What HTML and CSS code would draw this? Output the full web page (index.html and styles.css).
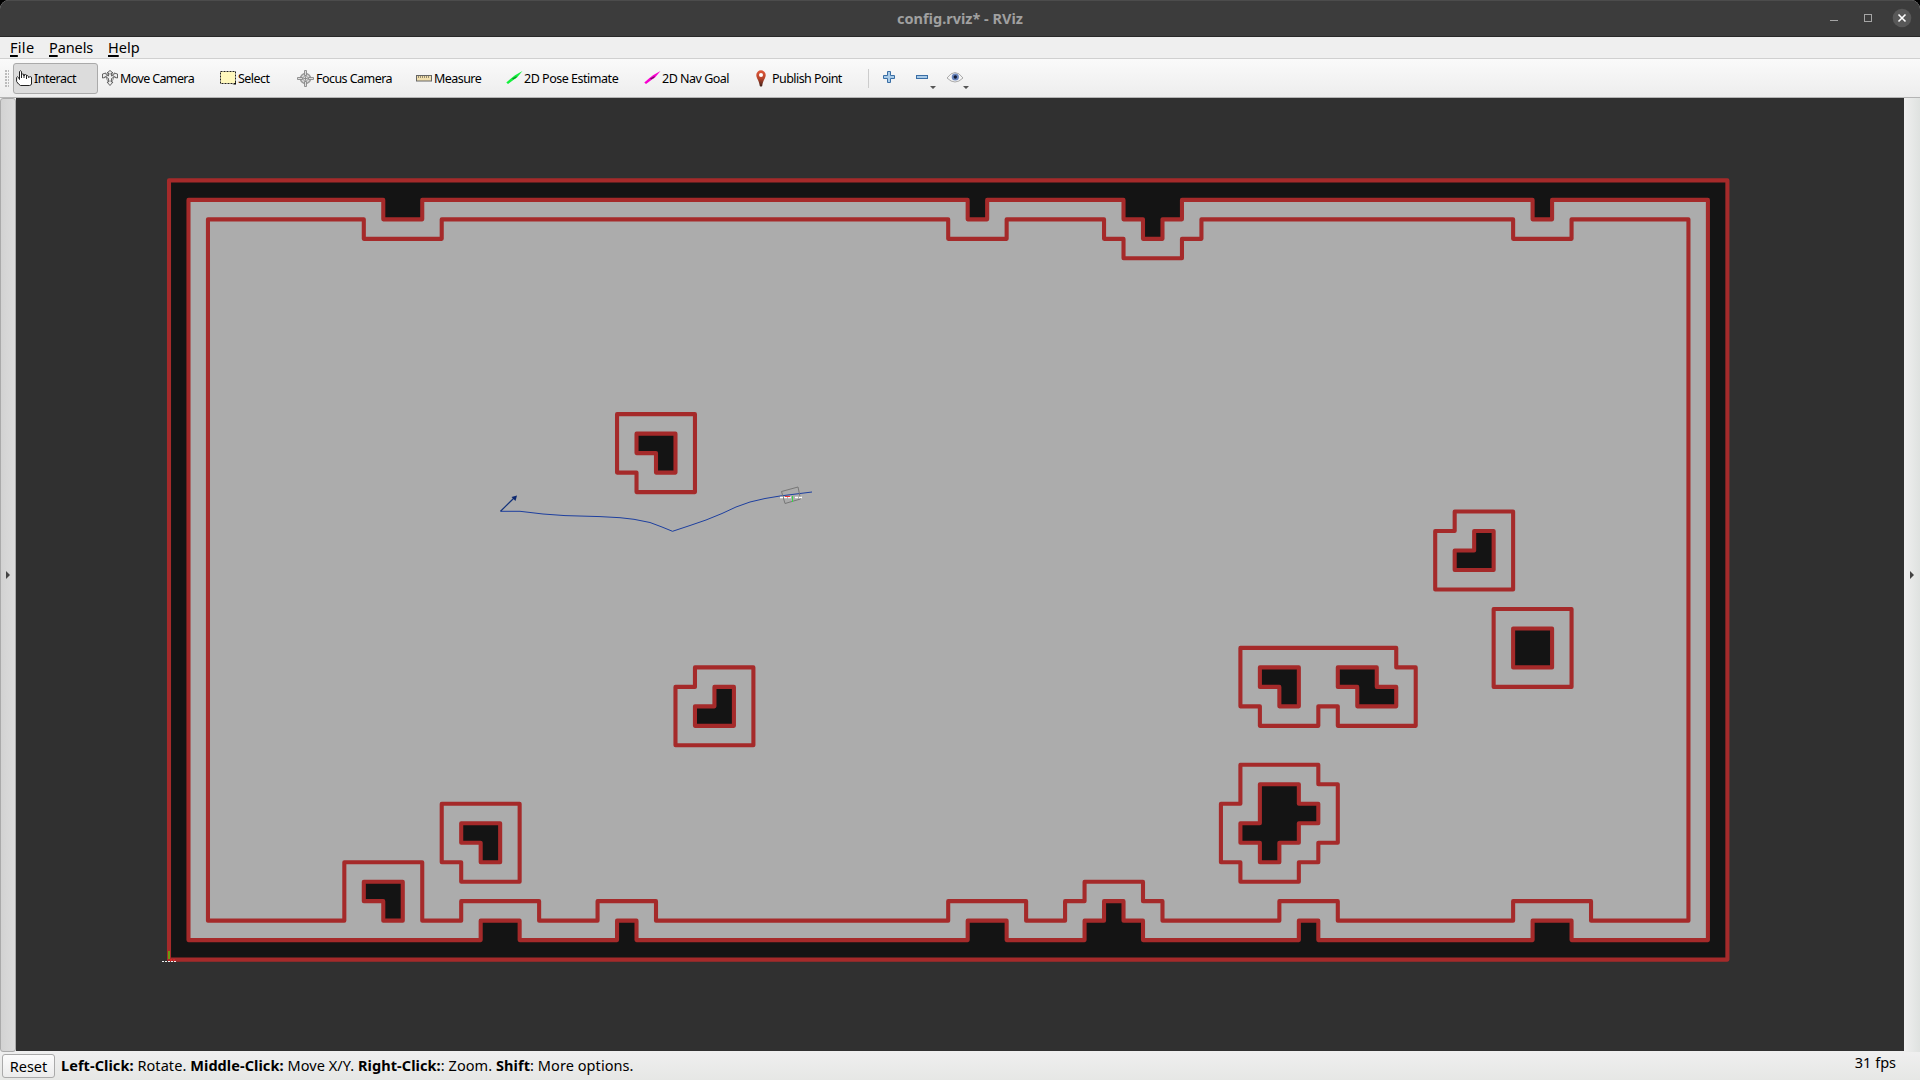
FILE: index.html
```html
<!DOCTYPE html>
<html lang="en">
<head>
<meta charset="utf-8">
<title>config.rviz* - RViz</title>
<link rel="stylesheet" href="styles.css">
</head>
<body>
<div class="window">
  <header class="titlebar">
    <span class="title">config.rviz* - RViz</span>
    <svg class="window-buttons" width="98" height="36" viewBox="1822 0 98 36">
      <path d="M1830 20.5h8" stroke="#a5a5a5" fill="none"/>
      <rect x="1864.500" y="14.500" width="7" height="7" stroke="#a5a5a5" fill="none"/>
      <circle cx="1902" cy="18" r="9.300" fill="#585858"/>
      <path d="M1898.500 14.500l7 7m0-7l-7 7" stroke="#fff" stroke-width="1.600"/>
    </svg>
  </header>
  <nav class="menubar">
    <span class="menu m-file"><u>F</u>ile</span>
    <span class="menu m-panels"><u>P</u>anels</span>
    <span class="menu m-help"><u>H</u>elp</span>
  </nav>
  <div class="toolbar">
    <span class="grip"></span>
    <button class="tool t-interact active">
      <svg width="16" height="16" viewBox="0 0 16 16"><path d="M3.500 9.500V1.500Q4.500 0 5.500 1.500V6V4.500Q6.500 3.500 8 4.500V6V5Q9.500 4 10.500 5V7V6Q12 5 12.500 6.500V7.500Q15.500 5.500 15.500 8V14Q15 15.500 13.500 15.500H4.500Q2.500 14.500 .6 11.500V7.500Q1.500 6 2.500 7.500L3.500 9.500M5.500 6V8M8 5V8M10.500 6V9" fill="#fff" stroke="#222"/></svg>
      <span>Interact</span>
    </button>
    <button class="tool t-move">
      <svg width="16" height="16" viewBox="0 0 16 16"><path d="M8 .5L11 3H9.500V6L12 4.500V3L15.500 4V8L13 7.500V6.500L9.500 8.500V12H11L8 15.500L5 12H6.500V8.500L3 6.500V7.500L.5 8V4L4 3V4.500L6.500 6V3H5Z" fill="#eee" stroke="#555" stroke-width=".9"/><circle cx="8" cy="7.500" r="3.700" fill="none" stroke="#777" stroke-width=".8"/></svg>
      <span>Move Camera</span>
    </button>
    <button class="tool t-select">
      <svg width="16" height="14" viewBox="0 0 16 14"><rect x=".5" y=".5" width="15" height="12" fill="#fff8bd" stroke="#222" stroke-dasharray="2 1"/><path d="M16 10v3.500h-4q3 0 4-3.500" fill="#000"/></svg>
      <span>Select</span>
    </button>
    <button class="tool t-focus">
      <svg width="17" height="17" viewBox="0 0 17 17"><circle cx="8.500" cy="8.500" r="5" fill="#ddd" stroke="#999" stroke-width="1.500"/><circle cx="8.500" cy="8.500" r="2.500" fill="#ddd" stroke="#aaa"/><path d="M7.500 .5h2v5h-2zM7.500 11.500h2v5h-2zM.5 7.500h5v2h-5zM11.500 7.500h5v2h-5zM8.500 6.500v4M6.500 8.500h4" fill="#ddd" stroke="#888" stroke-width=".9"/></svg>
      <span>Focus Camera</span>
    </button>
    <button class="tool t-measure">
      <svg width="16" height="8" viewBox="0 0 16 8"><rect x=".5" y="1.500" width="15" height="5.500" fill="#f1dfae" stroke="#666"/><path d="M2.500 2v2M4.500 2v2M6.500 2v2M8.500 2v2M10.500 2v2M12.500 2v2" stroke="#7c755f" stroke-width=".8"/></svg>
      <span>Measure</span>
    </button>
    <button class="tool t-pose">
      <svg width="17" height="14" viewBox="0 0 17 14"><path d="M.3 11.500L5.500 7L9 4.300L16.500 0L11 6.500L8 8.500L2 13Z" fill="#14f03c"/><path d="M6 7.500l5-2.500-1 2-3 1.500z" fill="#079424"/></svg>
      <span>2D Pose Estimate</span>
    </button>
    <button class="tool t-nav">
      <svg width="17" height="14" viewBox="0 0 17 14"><path d="M.3 11.500L5.500 7L9 4.300L16.500 0L11 6.500L8 8.500L2 13Z" fill="#f800d0"/><path d="M6 7.500l5-2.500-1 2-3 1.500z" fill="#7a0868"/></svg>
      <span>2D Nav Goal</span>
    </button>
    <button class="tool t-publish">
      <svg width="10" height="17" viewBox="0 0 10 17"><defs><linearGradient id="pin" x2="0" y2="1"><stop stop-color="#e0583a"/><stop offset=".5" stop-color="#b8452c"/><stop offset="1" stop-color="#3f2018"/></linearGradient></defs><path d="M5 .3a4.700 4.700 0 0 1 4.700 4.700c0 3.500-2.700 5-3.500 11q-1.200 1-2.400 0C3 10 .3 8.500 .3 5A4.700 4.700 0 0 1 5 .3z" fill="url(#pin)"/><circle cx="5" cy="5" r="2" fill="#fff"/></svg>
      <span>Publish Point</span>
    </button>
    <span class="separator"></span>
    <svg class="extras" width="104" height="26" viewBox="880 66 104 26">
      <path d="M887.500 72.500h3v4h4v3h-4v4h-3v-4h-4v-3h4z" fill="#a9cbe8" stroke="#3a6ea5"/>
      <rect x="916.500" y="76.500" width="11" height="3" fill="#a9cbe8" stroke="#3a6ea5"/>
      <path d="M930 87h6l-3 3zM963 87h6l-3 3z" fill="#555"/>
      <path d="M947 79q8-11 16 0q-8 8-16 0z" fill="#f4f4f4" stroke="#aaa" stroke-width="1"/>
      <circle cx="955.300" cy="78" r="3.600" fill="#6985bd"/><circle cx="955.300" cy="78" r="1.700" fill="#111b35"/>
    </svg>
  </div>
  <main class="workspace">
    <div class="dock dock-left"><span class="arrow"></span></div>
    <svg class="viewport" width="1888" height="953" viewBox="16 98 1888 953">
      <rect x="16" y="98" width="1888" height="953" fill="#303030"/>
      <g transform="translate(169 180.400) scale(19.480)" stroke="#a52a2a" stroke-width=".21" stroke-linejoin="round">
        <path fill="#141414" d="M0 0H80V40H0Z"/>
        <path fill="#acacac" d="M1 1H11V2H13V1H41V2H42V1H49V2H50V3H51V2H52V1H70V2H71V1H79V39H72V38H70V39H59V38H58V39H50V38H49V37H48V38H47V39H43V38H41V39H24V38H23V39H18V38H16V39H1Z"/>
        <path fill="none" d="M2 2H10V3H14V2H40V3H43V2H48V3H49V4H52V3H53V2H69V3H72V2H78V38H73V37H69V38H60V37H57V38H51V37H50V36H47V37H46V38H44V37H40V38H25V37H22V38H19V37H15V38H13V35H9V38H2Z"/>
        <path fill="none" d="M23 12H27V16H24V15H23ZM27 25H30V29H26V26H27ZM14 32H18V36H15V35H14ZM66 17H69V21H65V18H66ZM68 22H72V26H68ZM55 24H63V25H64V28H60V27H59V28H56V27H55ZM55 30H59V31H60V34H59V35H58V36H55V35H54V32H55Z"/>
        <path fill="#141414" d="M24 13H26V15H25V14H24ZM28 26H29V28H27V27H28ZM15 33H17V35H16V34H15ZM10 36H12V38H11V37H10ZM67 18H68V20H66V19H67ZM69 23H71V25H69ZM56 25H58V27H57V26H56ZM60 25H62V26H63V27H61V26H60ZM56 31H58V32H59V33H58V34H57V35H56V34H55V33H56Z"/>
      </g>
      <g fill="none">
        <path d="M500.500 511.300H520L543 514L565 515.600L600 516.600L620 517.700L634 519.300L650 522.500L662 527L672.500 531.300L690 525.500L706 520L722 513.500L736 507L750 502L765 498.500L780 496L812 492" stroke="#1d3f9f"/>
        <path d="M500.500 511.300L514 498" stroke="#12327a" stroke-width="1.200"/>
        <path d="M517 495.500l-5.500 1.500 4 4z" fill="#0c2870"/>
        <path d="M781.500 491.500L798 487L800.500 499L785 503.500Z" stroke="#777"/>
        <path d="M780 497.500h13M795 497.500h8" stroke="#fff" stroke-width="1.500" stroke-dasharray="3 1"/>
        <path d="M785 496.500h5" stroke="#e33"/><path d="M792.500 496v6" stroke="#3d4"/>
        <path d="M169 951v8" stroke="#6b9a10" stroke-width="2"/>
        <path d="M162 961.500h14" stroke="#eee" stroke-dasharray="2 1"/><path d="M170 960h6" stroke="#f22" stroke-dasharray="2 1"/>
      </g>
    </svg>
    <div class="dock dock-right"><span class="arrow"></span></div>
  </main>
  <footer class="statusbar">
    <button class="reset">Reset</button>
    <span class="hint"><b>Left-Click:</b> Rotate. <b>Middle-Click:</b> Move X/Y. <b>Right-Click:</b>: Zoom. <b>Shift</b>: More options.</span>
    <span class="fps">31 fps</span>
  </footer>
</div>
</body>
</html>
```
FILE: styles.css
```css
* { box-sizing: border-box; }
body { margin: 0; background: #000; font-family: "Noto Sans", sans-serif; color: #000; }
button { font: inherit; color: inherit; margin: 0; padding: 0; border: 0; background: none; }
svg { display: block; flex: none; }
.window { width: 1920px; height: 1080px; display: flex; flex-direction: column; background: #efefef; border-radius: 9px 9px 0 0; overflow: hidden; }
.titlebar { height: 37px; display: grid; grid-template-columns: 98px 1fr 98px; background: #3c3c3c; border-top: 1px solid #4c4c4c; border-bottom: 1px solid #282828; }
.title { grid-column: 2; text-align: center; font-size: 14.500px; font-weight: 700; line-height: 35px; color: #a0a0a0; letter-spacing: 0; }
.window-buttons { margin-top: -1px; }
.menubar { height: 22px; display: flex; padding-left: 10px; border-bottom: 1px solid #d0d0d0; font-size: 14.500px; line-height: 21px; }
.menu { white-space: nowrap; }
.menu u { text-underline-offset: 2px; text-decoration-thickness: 1.500px; }
.m-file { width: 39px; letter-spacing: .3px; }
.m-panels { width: 59px; letter-spacing: -.1px; }
.toolbar { height: 39px; display: flex; align-items: center; background: linear-gradient(#fafafa, #ededed); border-bottom: 1px solid #b4b4b4; }
.grip { width: 4px; height: 17px; margin: 0 4px 0 5px; background: radial-gradient(circle at 1px 1px, #bbb 0.8px, transparent 1px) 0 0 / 3px 3px; }
.tool { height: 31px; display: flex; align-items: center; gap: 2px; padding-left: 3px; font-size: 12.500px; white-space: nowrap; letter-spacing: -.55px; border: 1px solid transparent; border-radius: 3px; }
.tool.active { background: #dcdcdc; border-color: #aaa; }
.t-interact { width: 85px; padding-left: 2px; letter-spacing: -.5px; }
.t-move { width: 118px; letter-spacing: -.62px; }
.t-select { width: 77px; }
.t-focus { width: 119px; }
.t-measure { width: 90px; }
.t-pose { width: 138px; gap: 1px; letter-spacing: -.48px; }
.t-nav { width: 112px; gap: 1px; letter-spacing: -.5px; }
.t-publish { width: 116px; gap: 6px; }
.separator { width: 1px; height: 19px; background: #ccc; margin-right: 11px; }
.workspace { height: 954px; display: grid; grid-template-columns: 16px 1888px 16px; }
.dock { display: flex; align-items: center; justify-content: center; }
.dock-left { background: linear-gradient(90deg, #d2d2d2, #dcdcdc); border: 1px solid #aaa; border-radius: 3px; }
.dock-right { background: linear-gradient(90deg, #efefef, #dfe2e0); }
.arrow { border: 4px solid transparent; border-right: 0; border-left-color: #444; }
.statusbar { height: 28px; display: flex; align-items: center; padding-left: 2px; background: linear-gradient(#efefef, #e6e7e5); font-size: 14.500px; }
.reset { width: 53px; height: 24px; border: 1px solid #aaa; border-radius: 3px; background: linear-gradient(#fcfcfc, #ececec); }
.hint { margin-left: 6px; padding-bottom: 2px; letter-spacing: .07px; white-space: nowrap; }
.fps { margin-left: auto; margin-right: 24px; padding-bottom: 8px; }
```
